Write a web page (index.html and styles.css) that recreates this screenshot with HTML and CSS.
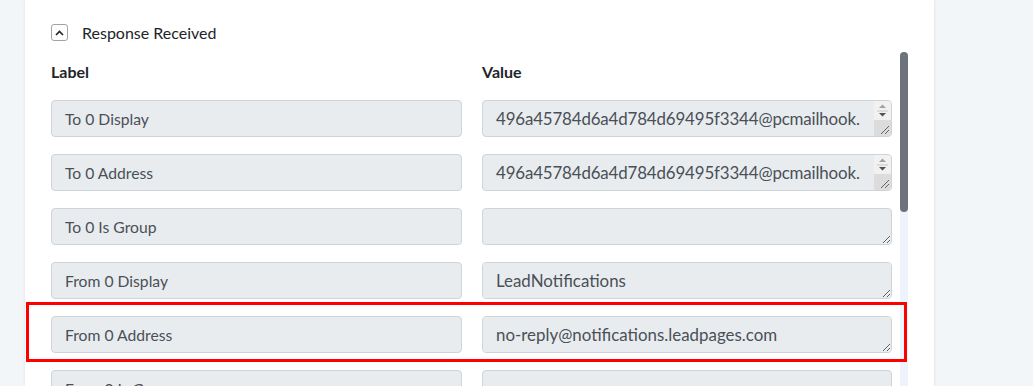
FILE: index.html
```html
<html>
  <head>
    <title>Response Received</title>
    <link rel="stylesheet" href="styles.css">
  </head>
  <body>
    <div class="page">
      <section class="card">
        <div class="toggle">
          <span class="toggle-btn">
            <svg width="9" height="6" viewBox="0 0 9 6">
              <polyline points="1,5 4.5,1.5 8,5" fill="none" stroke="#222" stroke-width="1.6" />
            </svg>
          </span>
          <span class="toggle-title">Response Received</span>
        </div>

        <div class="scroll-area">
          <main class="fields">
            <div class="col-head">Label</div>
            <div class="col-head">Value</div>

            <input class="field" type="text" value="To 0 Display" readonly>
            <div class="value-cell">
              <textarea class="field value overflowing" readonly>496a45784d6a4d784d69495f3344@pcmailhook.com</textarea>
              <div class="mini-scroll">
                <svg width="17" height="36" viewBox="0 0 17 36">
                  <rect x="0" y="0" width="17" height="19" fill="#f1f1f1" />
                  <polygon points="5,7 12,7 8.5,3.5" fill="#a3a3a3" />
                  <line x1="3" y1="10" x2="14" y2="10" stroke="#c8c8c8" stroke-width="1" />
                  <polygon points="5,12 12,12 8.5,15.5" fill="#505050" />
                  <rect x="0" y="19" width="17" height="17" fill="#dcdcdc" />
                  <line x1="7" y1="33" x2="15" y2="25" stroke="#555" stroke-width="0.9" />
                  <line x1="11" y1="33" x2="15" y2="29" stroke="#555" stroke-width="0.9" />
                </svg>
              </div>
            </div>

            <input class="field" type="text" value="To 0 Address" readonly>
            <div class="value-cell">
              <textarea class="field value overflowing" readonly>496a45784d6a4d784d69495f3344@pcmailhook.com</textarea>
              <div class="mini-scroll">
                <svg width="17" height="36" viewBox="0 0 17 36">
                  <rect x="0" y="0" width="17" height="19" fill="#f1f1f1" />
                  <polygon points="5,7 12,7 8.5,3.5" fill="#a3a3a3" />
                  <line x1="3" y1="10" x2="14" y2="10" stroke="#c8c8c8" stroke-width="1" />
                  <polygon points="5,12 12,12 8.5,15.5" fill="#505050" />
                  <rect x="0" y="19" width="17" height="17" fill="#dcdcdc" />
                  <line x1="7" y1="33" x2="15" y2="25" stroke="#555" stroke-width="0.9" />
                  <line x1="11" y1="33" x2="15" y2="29" stroke="#555" stroke-width="0.9" />
                </svg>
              </div>
            </div>

            <input class="field" type="text" value="To 0 Is Group" readonly>
            <div class="value-cell">
              <textarea class="field value" readonly></textarea>
            </div>

            <input class="field" type="text" value="From 0 Display" readonly>
            <div class="value-cell">
              <textarea class="field value" readonly>LeadNotifications</textarea>
            </div>

            <input class="field" type="text" value="From 0 Address" readonly>
            <div class="value-cell">
              <textarea class="field value" readonly>no-reply@notifications.leadpages.com</textarea>
            </div>

            <input class="field" type="text" value="From 0 Is Group" readonly>
            <div class="value-cell">
              <textarea class="field value" readonly></textarea>
            </div>
          </main>
          <div class="scrollbar">
            <div class="scrollbar-thumb"></div>
          </div>
        </div>

        <div class="highlight"></div>
      </section>
    </div>
  </body>
</html>
```

FILE: styles.css
```css
html,
body {
  padding: 0;
  margin: 0;
  font-family: Lato, "Open Sans", sans-serif;
  background: #f3f6f9;
  overflow: hidden;
}

.page {
  display: flex;
  height: 100vh;
  padding-left: 25px;
}

.card {
  position: relative;
  width: 909px;
  background: #fff;
  box-shadow: 1px 0 2px rgba(0, 0, 0, 0.06), -1px 0 2px rgba(0, 0, 0, 0.04);
  padding: 24px 26px 0 26px;
  box-sizing: border-box;
}

.toggle {
  display: flex;
  align-items: center;
  gap: 14px;
  height: 17px;
}

.toggle-btn {
  display: flex;
  justify-content: center;
  align-items: center;
  width: 17px;
  height: 17px;
  box-sizing: border-box;
  border: 1px solid #9ea4aa;
  border-radius: 3px;
}

.toggle-title {
  font-size: 16px;
  color: #212529;
}

.scroll-area {
  display: flex;
  gap: 8px;
  margin-top: 11px;
}

.fields {
  flex: 1;
  display: grid;
  grid-template-columns: 411px 410px;
  column-gap: 20px;
  row-gap: 17px;
  align-content: start;
  padding-top: 11px;
}

.col-head {
  font-size: 16px;
  line-height: 18px;
  font-weight: bold;
  color: #212529;
  margin-bottom: 2px;
}

.field {
  display: block;
  width: 100%;
  height: 37px;
  box-sizing: border-box;
  margin: 0;
  padding: 7px 13px;
  border: 1px solid #ced4da;
  border-radius: 4px;
  background: #e9ecef;
  color: #495057;
  font-family: Lato, "Open Sans", sans-serif;
  font-size: 15.7px;
  line-height: 22px;
  outline: none;
}

.value-cell {
  position: relative;
}

.field.value {
  font-size: 16.9px;
  resize: vertical;
  overflow-y: auto;
  padding-right: 4px;
}

.field.value.overflowing {
  overflow: hidden;
  letter-spacing: -0.15px;
  padding-right: 26px;
}

.mini-scroll {
  position: absolute;
  top: 1px;
  right: 1px;
  width: 17px;
  height: 35px;
  overflow: hidden;
  border-radius: 0 3px 3px 0;
}

.mini-scroll svg {
  display: block;
}

.scrollbar {
  width: 8px;
  height: 360px;
  background: #eef4fd;
  border-radius: 4px;
}

.scrollbar-thumb {
  height: 160px;
  background: #6c737a;
  border-radius: 4px;
}

.highlight {
  position: absolute;
  left: 1px;
  top: 302px;
  width: 881px;
  height: 60px;
  box-sizing: border-box;
  border: 3px solid #ff0000;
}
```
